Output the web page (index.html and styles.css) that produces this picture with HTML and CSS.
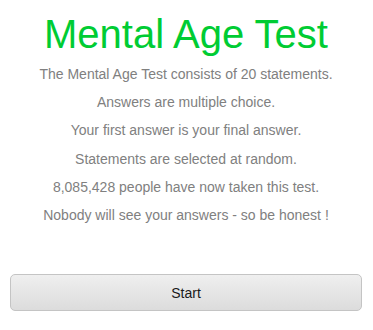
FILE: index.html
```html
<!DOCTYPE html>
<html>
<head>
<meta charset="utf-8">
<link rel="stylesheet" href="styles.css">
</head>
<body>
<div class="page">
  <h1 class="title">Mental Age Test</h1>
  <div class="intro">
    <div class="line">The Mental Age Test consists of 20 statements.</div>
    <div class="line">Answers are multiple choice.</div>
    <div class="line">Your first answer is your final answer.</div>
    <div class="line">Statements are selected at random.</div>
    <div class="line">8,085,428 people have now taken this test.</div>
    <div class="line">Nobody will see your answers - so be honest !</div>
  </div>
  <button class="start">Start</button>
</div>
</body>
</html>
```

FILE: styles.css
```css
html, body {
  margin: 0;
  padding: 0;
  background: #ffffff;
}
.page {
  font-family: "Liberation Sans", Arial, sans-serif;
  padding: 11px 11px 0 10px;
  display: flex;
  flex-direction: column;
}
.title {
  margin: 0;
  font-size: 40px;
  font-weight: normal;
  line-height: 46px;
  color: #00cc33;
  text-align: center;
}
.intro {
  margin-top: 3px;
  text-align: center;
  color: #808080;
  font-size: 14px;
}
.line {
  line-height: 28.2px;
}
.start {
  margin-top: 45px;
  height: 37px;
  width: 100%;
  border: 1px solid #c4c4c4;
  border-radius: 5px;
  background: linear-gradient(#efefef, #dcdcdc);
  font-family: "Liberation Sans", Arial, sans-serif;
  font-size: 14px;
  color: #1a1a1a;
  padding: 0;
}
```
